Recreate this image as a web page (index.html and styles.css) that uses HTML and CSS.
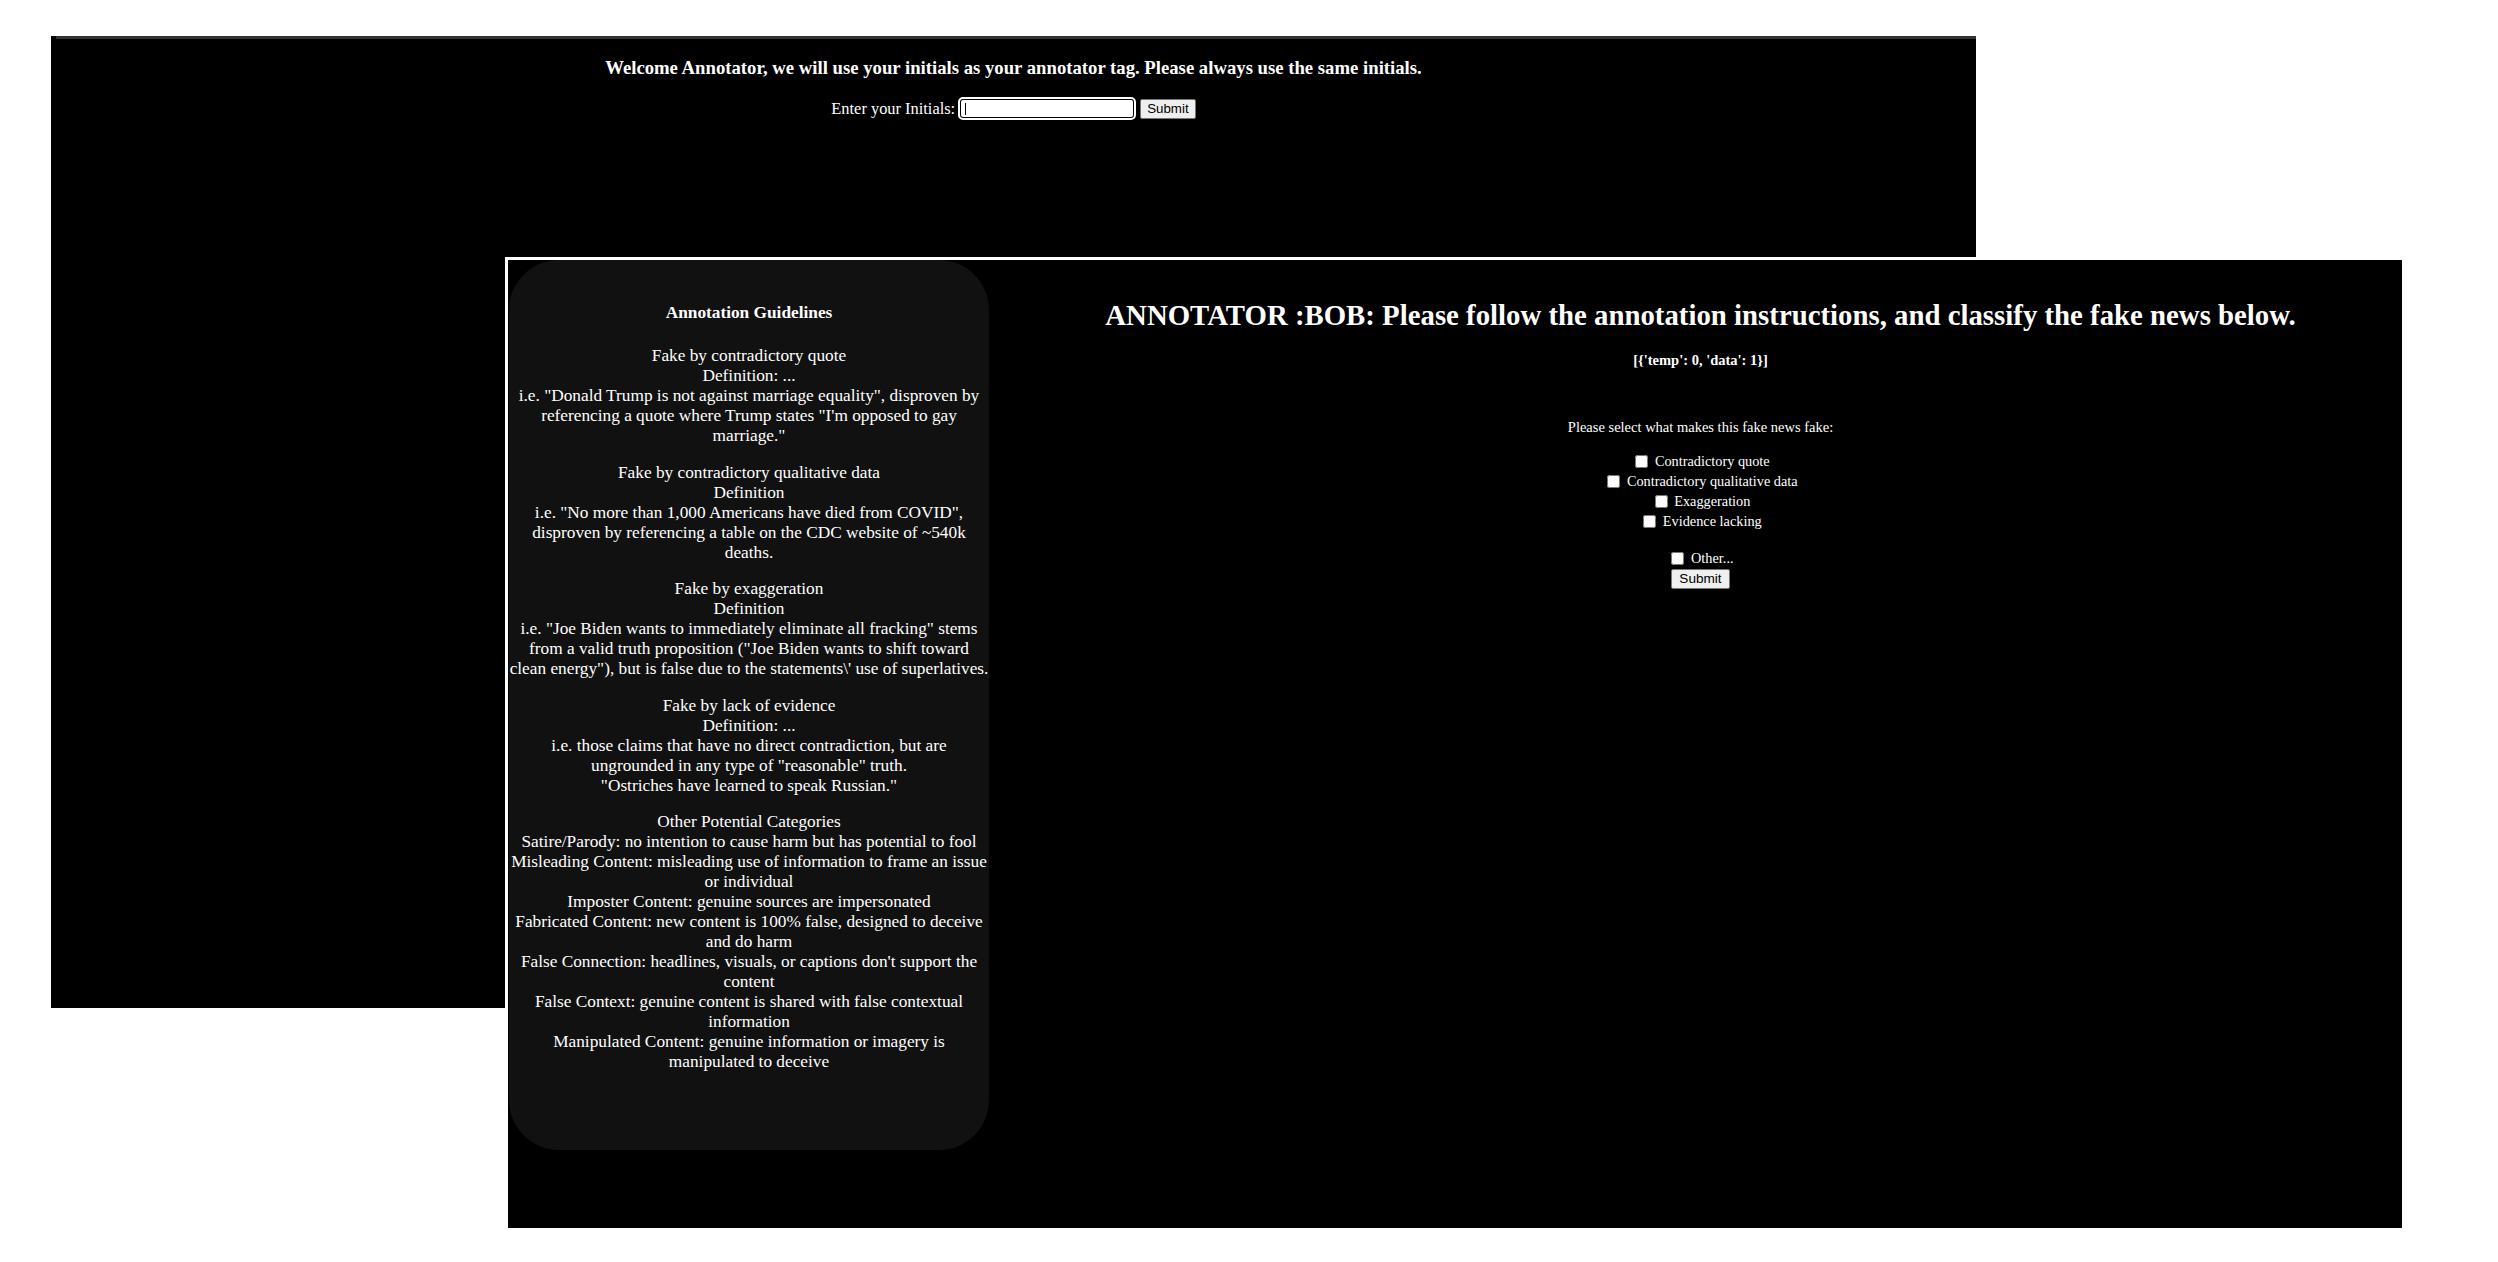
FILE: index.html
```html
<!DOCTYPE html>
<html>
<head>
<meta charset="utf-8">
<title>Annotator</title>
<link rel="stylesheet" href="styles.css">
</head>
<body>
<div class="win1">
  <div class="win1-bar"></div>
  <h3 class="welcome">Welcome Annotator, we will use your initials as your annotator tag. Please always use the same initials.</h3>
  <div class="initials-row">
    <label class="initials-label" for="ini">Enter your Initials:</label>
    <input id="ini" class="initials-input" type="text">
    <button class="btn">Submit</button>
  </div>
</div>

<div class="win2">
  <aside class="guide">
    <h4 class="guide-title">Annotation Guidelines</h4>
    <p>Fake by contradictory quote<br>Definition: ...<br>i.e. "Donald Trump is not against marriage equality", disproven by<br>referencing a quote where Trump states "I'm opposed to gay<br>marriage."</p>
    <p>Fake by contradictory qualitative data<br>Definition<br>i.e. "No more than 1,000 Americans have died from COVID",<br>disproven by referencing a table on the CDC website of ~540k<br>deaths.</p>
    <p>Fake by exaggeration<br>Definition<br>i.e. "Joe Biden wants to immediately eliminate all fracking" stems<br>from a valid truth proposition ("Joe Biden wants to shift toward<br>clean energy"), but is false due to the statements\' use of superlatives.</p>
    <p>Fake by lack of evidence<br>Definition: ...<br>i.e. those claims that have no direct contradiction, but are<br>ungrounded in any type of "reasonable" truth.<br>"Ostriches have learned to speak Russian."</p>
    <p>Other Potential Categories<br>Satire/Parody: no intention to cause harm but has potential to fool<br>Misleading Content: misleading use of information to frame an issue<br>or individual<br>Imposter Content: genuine sources are impersonated<br>Fabricated Content: new content is 100% false, designed to deceive<br>and do harm<br>False Connection: headlines, visuals, or captions don't support the<br>content<br>False Context: genuine content is shared with false contextual<br>information<br>Manipulated Content: genuine information or imagery is<br>manipulated to deceive</p>
  </aside>
  <main class="pane">
    <h2 class="title">ANNOTATOR :BOB: Please follow the annotation instructions, and classify the fake news below.</h2>
    <h5 class="data">[{'temp': 0, 'data': 1}]</h5>
    <p class="prompt">Please select what makes this fake news fake:</p>
    <form class="choices">
      <div class="row"><input type="checkbox" class="cb"> Contradictory quote</div>
      <div class="row"><input type="checkbox" class="cb"> Contradictory qualitative data</div>
      <div class="row"><input type="checkbox" class="cb"> Exaggeration</div>
      <div class="row"><input type="checkbox" class="cb"> Evidence lacking</div>
      <div class="row other"><input type="checkbox" class="cb"> Other...</div>
      <div class="row"><button type="button" class="btn btn-small">Submit</button></div>
    </form>
  </main>
</div>
</body>
</html>
```
FILE: styles.css
```css
html, body {
  margin: 0;
  padding: 0;
}
body {
  width: 2498px;
  height: 1262px;
  background: #fff;
  position: relative;
  overflow: hidden;
  font-family: "Liberation Serif", "Times New Roman", serif;
}

/* first window (login) */
.win1 {
  position: absolute;
  left: 51px;
  top: 36px;
  width: 1925px;
  height: 972px;
  background: #000;
  color: #fff;
}
.win1-bar {
  height: 3px;
  margin-left: 5px;
  background: #333;
}
.welcome {
  margin: 18px 0 0;
  font-size: 18.72px;
  line-height: 22px;
  font-weight: bold;
  text-align: center;
}
.initials-row {
  display: flex;
  justify-content: center;
  align-items: center;
  margin-top: 20px;
  height: 19px;
}
.initials-label {
  font-size: 16.4px;
  line-height: 19px;
  margin-right: 5px;
}
.initials-input {
  box-sizing: border-box;
  width: 174px;
  height: 19px;
  margin: 0 6px 0 0;
  padding: 0;
  border: 1px solid #000;
  border-radius: 3px;
  outline: 2px solid #fff;
  background: linear-gradient(#000, #000) no-repeat 4px 3px / 1px 12px, #fff;
}
.btn {
  box-sizing: border-box;
  height: 20px;
  margin: 0;
  padding: 0 6px;
  font-family: "Liberation Sans", Arial, sans-serif;
  font-size: 13.33px;
  line-height: 18px;
  color: #000;
  background: #efefef;
  border: 1px solid #767676;
  border-radius: 2px;
}
.btn-small {
  padding: 0 7px;
  font-size: 13.6px;
}

/* second window (annotation) */
.win2 {
  position: absolute;
  left: 505px;
  top: 257px;
  width: 1897px;
  height: 971px;
  box-sizing: border-box;
  border-top: 3px solid #fff;
  border-left: 3px solid #fff;
  background: #000;
  color: #fff;
  display: flex;
  align-items: flex-start;
}
.guide {
  box-sizing: border-box;
  width: 480px;
  height: 890px;
  margin-left: 1px;
  padding-top: 20px;
  background: #111;
  border-radius: 50px;
  text-align: center;
  font-size: 17.3px;
  line-height: 20px;
  white-space: nowrap;
}
.guide-title {
  margin: 23px 0 23px;
  font-size: 17.3px;
  line-height: 20px;
  font-weight: bold;
}
.guide p {
  margin: 16.6px 0;
}

.pane {
  flex: 1;
  padding-top: 39px;
  padding-left: 10px;
  text-align: center;
}
.title {
  margin: 0;
  font-size: 28.8px;
  line-height: 32px;
  font-weight: bold;
}
.data {
  margin: 21px 0 0;
  font-size: 14.5px;
  line-height: 16px;
  font-weight: bold;
}
.prompt {
  margin: 51px 0 0;
  font-size: 14.5px;
  line-height: 16px;
}
.choices {
  margin: 16px 0 0;
  font-size: 14.3px;
}
.row {
  height: 20px;
  line-height: 20px;
}
.row.other {
  margin-top: 17px;
}
.cb {
  width: 13px;
  height: 13px;
  margin: 3px 3px 3px 4px;
  vertical-align: -2px;
}
```
